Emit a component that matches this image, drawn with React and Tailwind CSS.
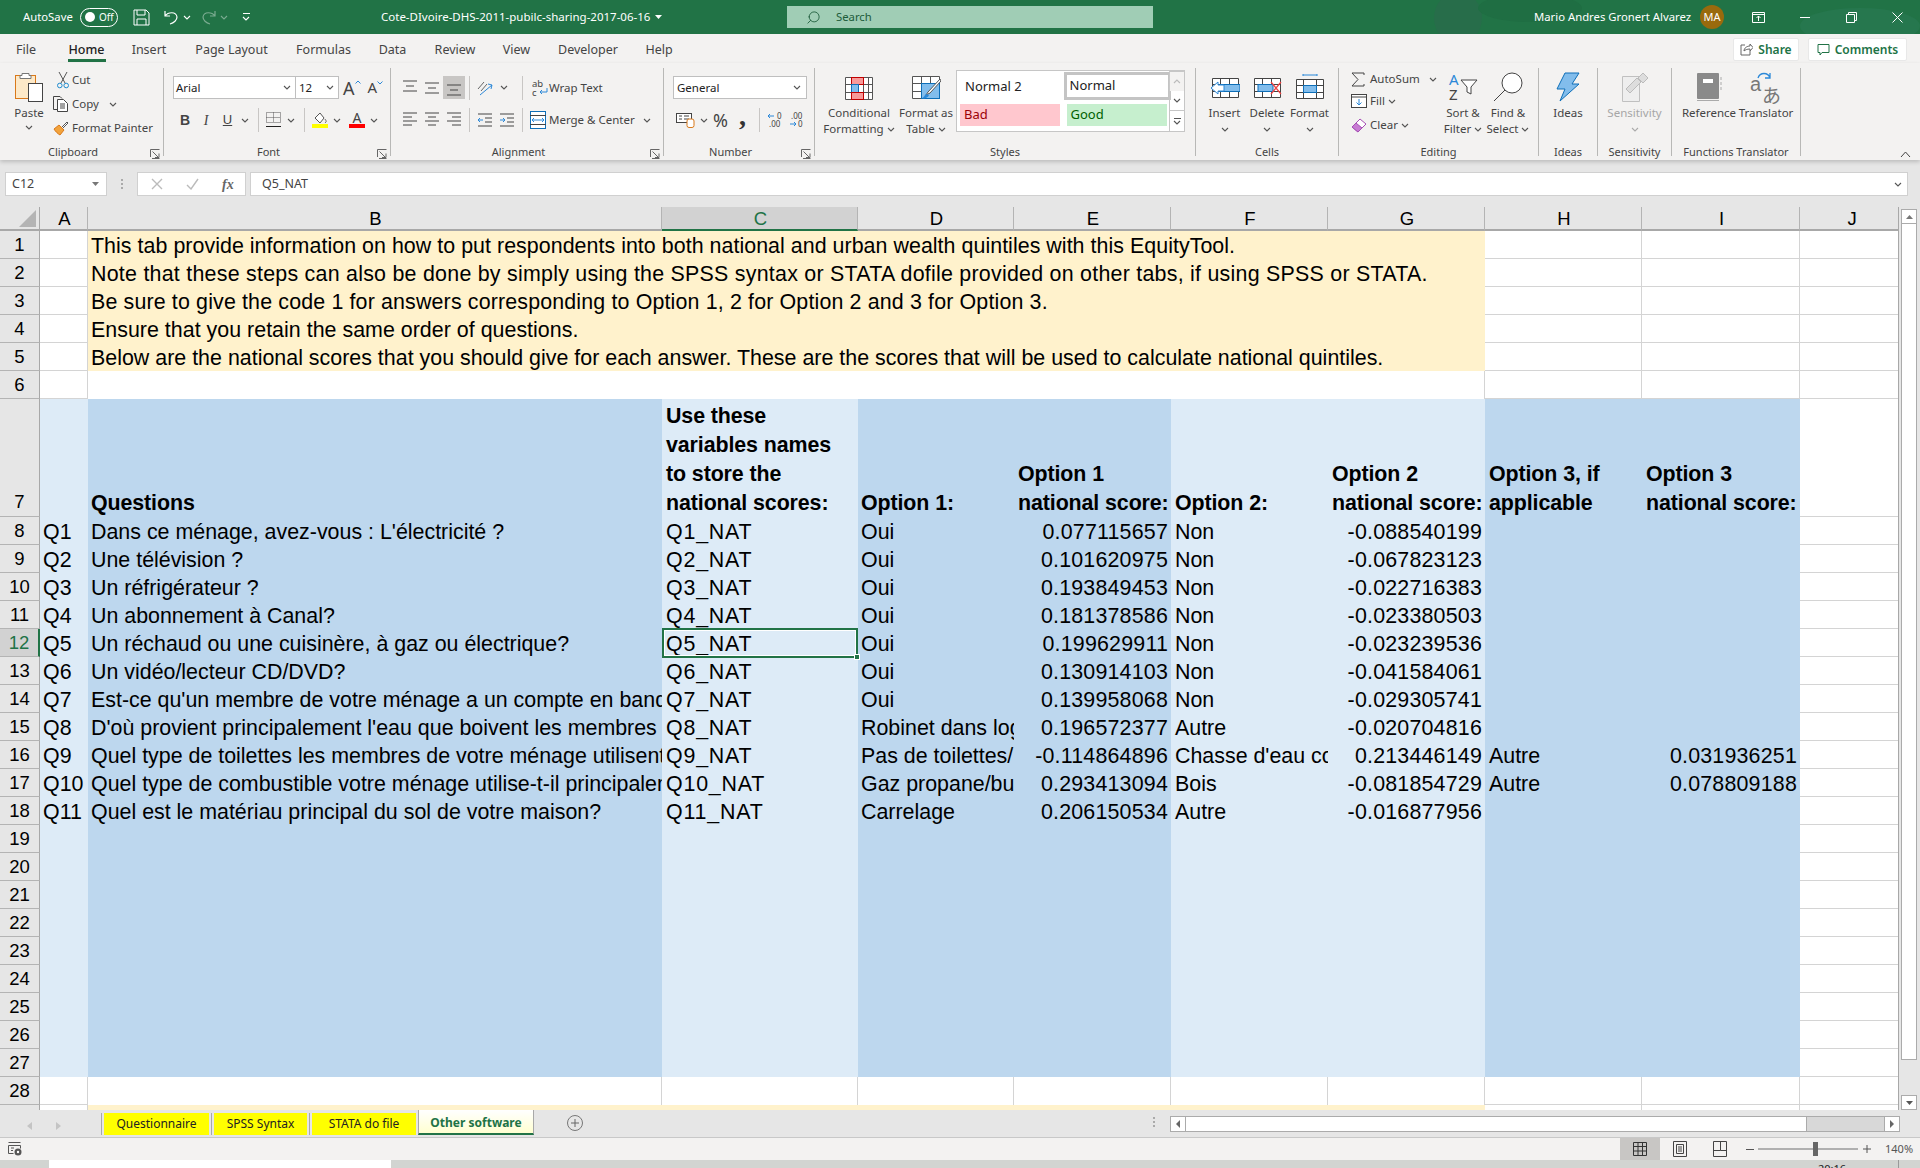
import React from "react";
import { Search } from "lucide-react";

const gridCols = "grid grid-rows-[minmax(0,1fr)] grid-cols-[40px_48px_574px_196px_156px_157px_157px_157px_157px_158px_99px]";
const dark = "bg-[#bdd7ee]";
const light = "bg-[#ddebf7]";
const cream = "bg-[#fff2cc]";
const plain = "bg-white border-r border-b border-[#d4d4d4]";
const bodyFills = [light, dark, light, dark, dark, light, light, dark, dark, plain];

// hinted Excel text runs wider on some lines, so each note keeps its own tracking
const notes = [
  ["This tab provide information on how to put respondents into both national and urban wealth quintiles with this EquityTool.", "tracking-[0.04px]"],
  ["Note that these steps can also be done by simply using the SPSS syntax or STATA dofile provided on other tabs, if using SPSS or STATA.", "tracking-[0.25px]"],
  ["Be sure to give the code 1 for answers corresponding to Option 1, 2 for Option 2 and 3 for Option 3.", "tracking-[0.15px]"],
  ["Ensure that you retain the same order of questions.", "tracking-[0.02px]"],
  ["Below are the national scores that you should give for each answer. These are the scores that will be used to calculate national quintiles.", "tracking-[0.01px]"],
];

const rows = [
  ["Q1", "Dans ce ménage, avez-vous : L'électricité ?", "Q1_NAT", "Oui", "0.077115657", "Non", "-0.088540199"],
  ["Q2", "Une télévision ?", "Q2_NAT", "Oui", "0.101620975", "Non", "-0.067823123"],
  ["Q3", "Un réfrigérateur ?", "Q3_NAT", "Oui", "0.193849453", "Non", "-0.022716383"],
  ["Q4", "Un abonnement à Canal?", "Q4_NAT", "Oui", "0.181378586", "Non", "-0.023380503"],
  ["Q5", "Un réchaud ou une cuisinère, à gaz ou électrique?", "Q5_NAT", "Oui", "0.199629911", "Non", "-0.023239536"],
  ["Q6", "Un vidéo/lecteur CD/DVD?", "Q6_NAT", "Oui", "0.130914103", "Non", "-0.041584061"],
  ["Q7", "Est-ce qu'un membre de votre ménage a un compte en banque ?", "Q7_NAT", "Oui", "0.139958068", "Non", "-0.029305741"],
  ["Q8", "D'où provient principalement l'eau que boivent les membres de votre ménage ?", "Q8_NAT", "Robinet dans logement", "0.196572377", "Autre", "-0.020704816"],
  ["Q9", "Quel type de toilettes les membres de votre ménage utilisent ?", "Q9_NAT", "Pas de toilettes/nature", "-0.114864896", "Chasse d'eau connectée", "0.213446149", "Autre", "0.031936251"],
  ["Q10", "Quel type de combustible votre ménage utilise-t-il principalement ?", "Q10_NAT", "Gaz propane/butane", "0.293413094", "Bois", "-0.081854729", "Autre", "0.078809188"],
  ["Q11", "Quel est le matériau principal du sol de votre maison?", "Q11_NAT", "Carrelage", "0.206150534", "Autre", "-0.016877956"],
];

const Chev = ({ color = "#555" }) => (
  <svg width="8" height="5" viewBox="0 0 8 5" className="shrink-0">
    <path d="M1 1l3 3 3-3" fill="none" stroke={color} strokeWidth="1.1" />
  </svg>
);

const Launcher = () => (
  <svg width="10" height="10" viewBox="0 0 10 10">
    <path d="M0.5 8V0.5H9.5M2.5 2.5l6 6M5 8.5h4v-4M9.500 9.500H2" fill="none" stroke="#666" strokeWidth="1" />
  </svg>
);

const Lines = ({ kind }) => {
  const sets = {
    top: ["M0 1h14", "M3 6h8", "M0 11h14"],
    mid: ["M0 3h14", "M3 8h8", "M0 13h14"],
    bot: ["M0 5h14", "M3 10h8", "M0 15h14"],
    left: ["M0 1h14", "M0 5h9", "M0 9h14", "M0 13h9"],
    center: ["M0 1h14", "M3 5h8", "M0 9h14", "M3 13h8"],
    right: ["M0 1h14", "M5 5h9", "M0 9h14", "M5 13h9"],
  };
  return (
    <svg width="14" height="16" viewBox="0 0 14 16">
      {sets[kind].map((d) => <path key={d} d={d} stroke="#444" strokeWidth="1" />)}
    </svg>
  );
};

const CellsIcon = ({ children, width = 30 }) => (
  <svg width={width} height="26" viewBox={`0 0 ${width} 26`}>
    {children}
  </svg>
);

const BigBtn = ({ width, icon, lines, chev, gray }) => (
  <div className={`${width} flex flex-col items-center shrink-0 ${gray ? "text-[#a6a6a6]" : ""}`}>
    <div className="h-[37px] flex items-center justify-center">{icon}</div>
    {lines.map((l, i) => (
      <div key={l} className="h-[16px] leading-[16px] whitespace-nowrap flex items-center gap-[3px]">
        {l}
        {chev && i === lines.length - 1 && lines.length > 1 && <Chev />}
      </div>
    ))}
    {chev && lines.length === 1 && <div className="h-[16px] flex items-center"><Chev color={gray ? "#aaa" : "#555"} /></div>}
  </div>
);

const Group = ({ width, label, launcher, children }) => (
  <div className={`${width} shrink-0 h-[88px] border-r border-[#b8b8b6] flex flex-col relative`}>
    <div className="h-[76px] flex">{children}</div>
    <div className={`h-[12px] leading-[16px] text-[11px] text-center text-[#444] whitespace-nowrap ${launcher ? "pr-[17px]" : ""}`}>{label}</div>
    {launcher && <div className="absolute right-[3px] bottom-[-3px]"><Launcher /></div>}
  </div>
);

const Sep = ({ className = "" }) => <div className={`w-px h-[24px] bg-[#c8c6c4] shrink-0 ${className}`} />;

const Ribbon = () => (
  <div className="h-[97px] bg-[#f3f2f1] flex items-start pt-[5px] text-[11.5px] text-[#444] shrink-0 relative z-10 shadow-[0_2px_4px_rgba(0,0,0,0.18)]">
    <Group width="w-[164px]" label="Clipboard" launcher>
      <div className="w-[58px] flex flex-col items-center pt-[4px] shrink-0">
        <svg width="28" height="30" viewBox="0 0 28 30">
          <rect x="0.5" y="3.5" width="20" height="23" fill="#fde9c8" stroke="#d9791a" />
          <path d="M7 3.500V1.500h7v2h2v3H5v-3z" fill="#fff" stroke="#777" />
          <rect x="13.5" y="11.5" width="14" height="18" fill="#fff" stroke="#444" />
        </svg>
        <div className="leading-[16px] mt-[3px]">Paste</div>
        <div className="mt-[4px]"><Chev /></div>
      </div>
      <div className="flex flex-col ml-[-5px]">
        <div className="h-[24px] flex items-center">
          <div className="w-[19px] flex justify-center">
            <svg width="12" height="18" viewBox="0 0 12 18">
              <path d="M2 1l6 11M10 1L4 12" stroke="#555" fill="none" />
              <circle cx="2.8" cy="14.5" r="2.3" fill="none" stroke="#1e8bcd" />
              <circle cx="9.2" cy="14.5" r="2.3" fill="none" stroke="#1e8bcd" />
            </svg>
          </div>
          <span>Cut</span>
        </div>
        <div className="h-[24px] flex items-center">
          <div className="w-[19px]">
            <svg width="15" height="16" viewBox="0 0 15 16">
              <path d="M4 13.500H0.500V0.500H7l2 2" fill="none" stroke="#444" />
              <path d="M4.500 3.500H10.500l4 4v8h-10zM7 8h5M7 10h5M7 12h5" fill="#fff" stroke="#444" />
            </svg>
          </div>
          <span>Copy</span>
          <span className="ml-[10px]"><Chev /></span>
        </div>
        <div className="h-[24px] flex items-center">
          <div className="w-[19px]">
            <svg width="16" height="16" viewBox="0 0 16 16">
              <path d="M1 9l5-4 5 5-4 5c-2-1-5-4-6-6z" fill="#f2a33c" stroke="#d9791a" />
              <path d="M9 7l5-5 1 1-5 5" fill="#fff" stroke="#555" />
            </svg>
          </div>
          <span className="whitespace-nowrap">Format Painter</span>
        </div>
      </div>
    </Group>

    <Group width="w-[227px]" label="Font" launcher>
      <div className="flex flex-col pl-[9px] pt-[8px]">
        <div className="flex items-center h-[23px]">
          <div className="w-[123px] h-[23px] bg-white border border-[#bfbfbf] flex items-center justify-between pl-[2px] pr-[4px] text-[#222]">Arial<Chev /></div>
          <div className="w-[43px] h-[23px] bg-white border border-[#bfbfbf] border-l-0 flex items-center justify-between pl-[3px] pr-[4px] text-[#222]">12<Chev /></div>
          <span className="ml-[4px] text-[18px] leading-none text-[#444] flex items-start">
            A
            <svg width="6" height="4" viewBox="0 0 6 4" className="mt-[1px]"><path d="M0.500 3.500L3 1l2.500 2.500" fill="none" stroke="#2b88d8" /></svg>
          </span>
          <span className="ml-[7px] text-[15px] leading-none text-[#444] flex items-start">
            A
            <svg width="6" height="4" viewBox="0 0 6 4" className="mt-[1px]"><path d="M0.500 0.500L3 3l2.500-2.500" fill="none" stroke="#2b88d8" /></svg>
          </span>
        </div>
        <div className="flex items-center h-[24px] mt-[9px] text-[#444]">
          <span className="w-[22px] pl-[7px] font-bold text-[14px] font-['Liberation_Sans',sans-serif]">B</span>
          <span className="w-[22px] text-center italic text-[14px] font-['Liberation_Serif',serif]">I</span>
          <span className="w-[21px] text-center underline text-[13px] font-['Liberation_Sans',sans-serif]">U</span>
          <span className="ml-[3px]"><Chev /></span>
          <Sep className="ml-[9px]" />
          <svg width="15" height="16" viewBox="0 0 15 16" className="ml-[7px]">
            <path d="M0.500 0.500h14v10h-14zM7.500 0.500v10M0.500 5.500h14" fill="none" stroke="#555" strokeDasharray="1 1" />
            <path d="M0 14.500h15" stroke="#222" />
          </svg>
          <span className="ml-[6px]"><Chev /></span>
          <Sep className="ml-[9px]" />
          <div className="ml-[7px] w-[16px] flex flex-col items-center">
            <svg width="15" height="12" viewBox="0 0 15 12"><path d="M2 6l5-5 4 5-4 5zM12 7c1 2 2 2 0 4" fill="#fff" stroke="#555" /></svg>
            <div className="w-[16px] h-[4px] bg-[#ffff00]" />
          </div>
          <span className="ml-[5px]"><Chev /></span>
          <div className="ml-[8px] w-[16px] flex flex-col items-center leading-none">
            <span className="text-[14px] leading-[12px]">A</span>
            <div className="w-[16px] h-[4px] bg-[#ff0000]" />
          </div>
          <span className="ml-[5px]"><Chev /></span>
        </div>
      </div>
    </Group>

    <Group width="w-[273px]" label="Alignment" launcher>
      <div className="flex flex-col pl-[12px] pt-[8px]">
        <div className="flex items-center h-[23px]">
          <Lines kind="top" />
          <span className="ml-[8px]"><Lines kind="mid" /></span>
          <div className="ml-[4px] w-[22px] h-[23px] bg-[#c8c6c4] flex items-center justify-center"><Lines kind="bot" /></div>
          <Sep className="ml-[4px]" />
          <svg width="17" height="16" viewBox="0 0 17 16" className="ml-[7px]">
            <path d="M1 9l6-7M4 11l6-7" stroke="#666" fill="none" />
            <path d="M3 15L15 5M11 4l4 1-1 4" stroke="#2b88d8" fill="none" />
          </svg>
          <span className="ml-[6px]"><Chev /></span>
          <Sep className="ml-[14px]" />
          <svg width="16" height="20" viewBox="0 0 16 20" className="ml-[9px]">
            <text x="0" y="9" fontSize="9.5" fill="#444" fontFamily="Noto Sans">ab</text>
            <text x="0" y="18" fontSize="9.5" fill="#444" fontFamily="Noto Sans">c</text>
            <path d="M15 10v4H8M10 12l-2 2 2 2" fill="none" stroke="#2b88d8" />
          </svg>
          <span className="ml-[1px] whitespace-nowrap">Wrap Text</span>
        </div>
        <div className="flex items-center h-[24px] mt-[9px]">
          <Lines kind="left" />
          <span className="ml-[8px]"><Lines kind="center" /></span>
          <span className="ml-[8px]"><Lines kind="right" /></span>
          <Sep className="ml-[8px]" />
          <svg width="14" height="14" viewBox="0 0 14 14" className="ml-[8px]">
            <path d="M0 1h14M7 5h7M7 9h7M0 13h14" stroke="#444" />
            <path d="M5 7H0M2 5L0 7l2 2" stroke="#2b88d8" fill="none" />
          </svg>
          <svg width="14" height="14" viewBox="0 0 14 14" className="ml-[8px]">
            <path d="M0 1h14M7 5h7M7 9h7M0 13h14" stroke="#444" />
            <path d="M0 7h5M3 5l2 2-2 2" stroke="#2b88d8" fill="none" />
          </svg>
          <Sep className="ml-[8px]" />
          <svg width="16" height="18" viewBox="0 0 16 18" className="ml-[7px]">
            <rect x="0.5" y="0.5" width="15" height="17" fill="#fff" stroke="#0e6fb8" />
            <path d="M0 4.500h16M0 13.500h16" stroke="#444" />
            <path d="M2 9h12M4 7L2 9l2 2M12 7l2 2-2 2" stroke="#2b88d8" fill="none" />
          </svg>
          <span className="ml-[3px] w-[85px] whitespace-nowrap">Merge &amp; Center</span>
          <span className="ml-[9px]"><Chev /></span>
        </div>
      </div>
    </Group>

    <Group width="w-[151px]" label="Number" launcher>
      <div className="flex flex-col pl-[9px] pt-[8px]">
        <div className="w-[134px] h-[23px] bg-white border border-[#bfbfbf] flex items-center justify-between pl-[3px] pr-[5px] text-[#222]">General<Chev /></div>
        <div className="flex items-center h-[24px] mt-[9px]">
          <svg width="19" height="16" viewBox="0 0 19 16" className="ml-[3px]">
            <rect x="0.5" y="1.5" width="15" height="9" fill="#fff" stroke="#444" />
            <path d="M3 4h3M3 7h3M8 4h5M8 7h5" stroke="#444" />
            <rect x="11" y="7" width="7" height="8.5" rx="2" fill="#fff" stroke="#d9791a" />
          </svg>
          <span className="ml-[5px]"><Chev /></span>
          <span className="ml-[5px] w-[18px] text-[18px] leading-none text-[#444]">%</span>
          <span className="ml-[8px] w-[10px] text-[28px] leading-none font-bold font-['Liberation_Serif',serif] text-[#333] mt-[-8px]">,</span>
          <Sep className="ml-[10px]" />
          <svg width="16" height="16" viewBox="0 0 16 16" className="ml-[7px]">
            <path d="M7 4H1M3 2L1 4l2 2" stroke="#2b88d8" fill="none" />
            <text x="10" y="7" fontSize="8" fill="#444">0</text>
            <text x="2" y="15" fontSize="8" fill="#444">.00</text>
          </svg>
          <svg width="16" height="16" viewBox="0 0 16 16" className="ml-[6px]">
            <text x="2" y="7" fontSize="8" fill="#444">.00</text>
            <path d="M1 12h6M5 10l2 2-2 2" stroke="#2b88d8" fill="none" />
            <text x="9" y="15" fontSize="8" fill="#444">0</text>
          </svg>
        </div>
      </div>
    </Group>

    <Group width="w-[381px]" label="Styles">
      <div className="w-[4px] shrink-0" />
      <BigBtn
        width="w-[80px]"
        chev
        lines={["Conditional", "Formatting"]}
        icon={
          <CellsIcon>
            <path d="M1.500 3.500h27v22h-27zM1.500 10.500h27M1.500 18.500h27M7.500 3.500v22M19.500 3.500v22M24.500 3.500v22" fill="#fff" stroke="#555" />
            <rect x="7.5" y="3.5" width="12" height="7" fill="#f79a9a" stroke="#c00000" />
            <rect x="7.5" y="10.5" width="7" height="8" fill="#82bdec" stroke="#0e6fb8" />
            <rect x="7.5" y="18.5" width="12" height="7" fill="#f79a9a" stroke="#c00000" />
          </CellsIcon>
        }
      />
      <BigBtn
        width="w-[54px]"
        chev
        lines={["Format as", "Table"]}
        icon={
          <CellsIcon>
            <path d="M1.500 2.500h27v22h-27zM1.500 9.500h27M1.500 17.500h27M10.500 2.500v22M19.500 2.500v22" fill="#fff" stroke="#555" />
            <rect x="10.5" y="9.5" width="18" height="15" fill="#82bdec" stroke="#0e6fb8" />
            <path d="M29 5L17 18l-2 3 4-2L30 7z" fill="#fff" stroke="#555" />
            <path d="M15 20c-2 2-2 4-5 4 3 1 7 0 8-3z" fill="#2b88d8" />
          </CellsIcon>
        }
      />
      <div className="ml-[3px] mt-[2px] w-[229px] h-[62px] bg-white border border-[#c6c6c6] flex">
        <div className="w-[213px] grid grid-cols-2 grid-rows-[30px_30px] text-[13px] text-[#222] pl-[3px]">
          <div className="h-[30px] pt-[1px] flex items-center pl-[5px]">Normal 2</div>
          <div className="h-[28px] mt-[1px] ml-[-1px] border-[3px] border-[#c4c4c4] flex items-center pl-[3px] w-[107px]">Normal</div>
          <div className="h-[22px] mt-[3px] w-[100px] bg-[#ffc7ce] text-[#9c0006] flex items-center pl-[4px]">Bad</div>
          <div className="h-[22px] mt-[3px] ml-[2px] w-[100px] bg-[#c6efce] text-[#006100] flex items-center pl-[4px]">Good</div>
        </div>
        <div className="w-[15px] flex flex-col border-l border-[#c6c6c6]">
          <div className="h-[20px] bg-[#f3f2f1] border-b border-[#c6c6c6] flex items-center justify-center rotate-180"><Chev color="#bbb" /></div>
          <div className="h-[20px] border-b border-[#c6c6c6] flex items-center justify-center"><Chev /></div>
          <div className="flex-1 flex flex-col items-center justify-center gap-[1px]"><div className="w-[7px] h-px bg-[#555]" /><Chev /></div>
        </div>
      </div>
    </Group>

    <Group width="w-[143px]" label="Cells">
      <div className="w-[7px] shrink-0" />
      <BigBtn
        width="w-[43px]"
        chev
        lines={["Insert"]}
        icon={
          <CellsIcon>
            <path d="M2.500 4.500h26v19h-26zM2.500 10.500h26M2.500 17.500h26M10.500 4.500v19M19.500 4.500v19" fill="#fff" stroke="#444" />
            <rect x="10" y="10.5" width="20" height="7" fill="#82bdec" stroke="#0e6fb8" />
            <path d="M1 14l7-6v3h6v6H8v3z" fill="#fff" stroke="#2b88d8" />
          </CellsIcon>
        }
      />
      <BigBtn
        width="w-[42px]"
        chev
        lines={["Delete"]}
        icon={
          <CellsIcon>
            <path d="M2.500 4.500h26v19h-26zM2.500 10.500h26M2.500 17.500h26M10.500 4.500v19M19.500 4.500v19" fill="#fff" stroke="#444" />
            <rect x="6" y="10.5" width="15" height="7" fill="#82bdec" stroke="#0e6fb8" />
            <path d="M19 8l10 12M29 8L19 20" stroke="#ee4444" strokeWidth="1.2" />
          </CellsIcon>
        }
      />
      <BigBtn
        width="w-[43px]"
        chev
        lines={["Format"]}
        icon={
          <CellsIcon>
            <path d="M8 1h14M8 0v2M22 0v2" stroke="#2b88d8" />
            <path d="M1.500 5.500h27v19h-27zM1.500 11.500h27M1.500 18.500h27M8.500 5.500v19M21.500 5.500v19" fill="#fff" stroke="#444" />
            <rect x="8.5" y="11.5" width="13" height="7" fill="#82bdec" stroke="#0e6fb8" />
          </CellsIcon>
        }
      />
    </Group>

    <Group width="w-[200px]" label="Editing">
      <div className="w-[98px] shrink-0 flex flex-col pl-[12px]">
        <div className="h-[22px] flex items-center">
          <div className="w-[19px]">
            <svg width="14" height="15" viewBox="0 0 14 15"><path d="M13 3V1H1l6 6.500L1 14h12v-2" fill="none" stroke="#444" /></svg>
          </div>
          <span className="w-[50px]">AutoSum</span>
          <span className="ml-[9px]"><Chev /></span>
        </div>
        <div className="h-[22px] flex items-center">
          <div className="w-[19px]">
            <svg width="16" height="14" viewBox="0 0 16 14"><rect x="0.5" y="0.5" width="15" height="13" fill="#fff" stroke="#444" /><path d="M0 3h16" stroke="#444" /><path d="M8 5v6M5.500 8.500L8 11l2.500-2.500" fill="none" stroke="#2b88d8" /></svg>
          </div>
          <span>Fill</span>
          <span className="ml-[3px]"><Chev /></span>
        </div>
        <div className="h-[24px] mt-[1px] flex items-center">
          <div className="w-[19px]">
            <svg width="16" height="16" viewBox="0 0 16 16"><path d="M1 10l8-8 6 5-8 8z" fill="#fff" stroke="#a64fb5" /><path d="M1 10l4-4 6 5-4 4z" fill="#c77bd3" stroke="#a64fb5" /></svg>
          </div>
          <span>Clear</span>
          <span className="ml-[3px]"><Chev /></span>
        </div>
      </div>
      <BigBtn
        width="w-[52px]"
        chev
        lines={["Sort &", "Filter"]}
        icon={
          <svg width="30" height="30" viewBox="0 0 30 30">
            <text x="1" y="13" fontSize="15" fill="#2b88d8">A</text>
            <text x="1" y="28" fontSize="15" fill="#444">Z</text>
            <path d="M13 8h16l-6 7v7l-4-2v-5z" fill="#fff" stroke="#444" />
          </svg>
        }
      />
      <BigBtn
        width="w-[38px]"
        chev
        lines={["Find &", "Select"]}
        icon={
          <svg width="30" height="30" viewBox="0 0 30 30">
            <circle cx="19" cy="11" r="10" fill="#fff" stroke="#444" />
            <path d="M12 18L1 29" stroke="#444" />
          </svg>
        }
      />
    </Group>

    <Group width="w-[59px]" label="Ideas">
      <BigBtn
        width="w-full"
        lines={["Ideas"]}
        icon={
          <svg width="24" height="30" viewBox="0 0 24 30">
            <path d="M9 1h14l-7 11h7L4 29l5-12H1z" fill="#82bdec" stroke="#0e6fb8" />
          </svg>
        }
      />
    </Group>

    <Group width="w-[74px]" label="Sensitivity">
      <BigBtn
        width="w-full"
        gray
        chev
        lines={["Sensitivity"]}
        icon={
          <svg width="28" height="30" viewBox="0 0 28 30">
            <path d="M1.500 4.500h17v25h-17z" fill="#eee" stroke="#c0c0c0" />
            <path d="M5 17l11-11 4 4L9 21z" fill="#ddd" stroke="#bbb" />
            <path d="M17 6l5-5 5 5-5 5z" fill="#ddd" stroke="#bbb" />
          </svg>
        }
      />
    </Group>

    <Group width="w-[129px]" label="Functions Translator">
      <BigBtn
        width="w-[74px]"
        lines={["Reference"]}
        icon={
          <svg width="26" height="32" viewBox="0 0 26 32">
            <rect x="1" y="2" width="22" height="26" rx="1" fill="#8a8a8a" />
            <rect x="7" y="8" width="10" height="4" fill="#fff" />
            <path d="M1 29.500h22M25 6v3M25 11v3M25 16v3" stroke="#aaa" />
          </svg>
        }
      />
      <BigBtn
        width="w-[40px]"
        lines={["Translator"]}
        icon={
          <svg width="32" height="34" viewBox="0 0 32 34">
            <path d="M8 8c2-6 10-6 12 0M20 3v5h-5" fill="none" stroke="#2b88d8" strokeWidth="1.3" />
            <text x="0" y="21" fontSize="20" fill="#777" fontFamily="Liberation Sans">a</text>
            <text x="12" y="33" fontSize="19" fill="#777" fontFamily="Noto Sans CJK JP">あ</text>
          </svg>
        }
      />
    </Group>

    <div className="ml-auto mr-[9px] mt-[83px]">
      <svg width="11" height="7" viewBox="0 0 11 7"><path d="M1 6l4.500-5L10 6" fill="none" stroke="#444" /></svg>
    </div>
  </div>
);

const tabs = [
  ["File", "ml-[17px] w-[18px]"],
  ["Home", "ml-[33px] w-[37px]"],
  ["Insert", "ml-[28px] w-[32px]"],
  ["Page Layout", "ml-[31px] w-[71px]"],
  ["Formulas", "ml-[30px] w-[53px]"],
  ["Data", "ml-[29px] w-[27px]"],
  ["Review", "ml-[29px] w-[40px]"],
  ["View", "ml-[28px] w-[27px]"],
  ["Developer", "ml-[28px] w-[60px]"],
  ["Help", "ml-[28px] w-[26px]"],
];

const TabRow = () => (
  <div className="h-[29px] bg-[#f3f2f1] flex text-[12.5px] text-[#444] shrink-0">
    {tabs.map(([t, cls]) => (
      <div key={t} className={`${cls} h-[29px] flex flex-col items-center shrink-0`}>
        <div className={`h-[25px] leading-[32px] whitespace-nowrap ${t === "Home" ? "text-[#222] font-medium" : ""}`}>{t}</div>
        {t === "Home" && <div className="w-[38px] h-[3px] bg-[#217346]" />}
      </div>
    ))}
    <div className="ml-auto flex items-start pt-[4px] pr-[13px] gap-[9px] text-[#217346] font-semibold text-[12px]">
      <div className="w-[66px] h-[23px] bg-white rounded-[2px] border border-[#e8e8e8] flex items-center justify-center gap-[5px]">
        <svg width="13" height="13" viewBox="0 0 13 13"><path d="M5 2H1v10h9V8M4 8c0-3 3-5 6-5V1l3 3.500L10 8V6c-3 0-5 1-6 2z" fill="none" stroke="#666" /></svg>
        Share
      </div>
      <div className="w-[99px] h-[23px] bg-white rounded-[2px] border border-[#e8e8e8] flex items-center justify-center gap-[5px]">
        <svg width="13" height="13" viewBox="0 0 13 13"><path d="M1 1.500h11v8H5l-2 2.500V9.500H1z" fill="none" stroke="#217346" /></svg>
        Comments
      </div>
    </div>
  </div>
);

const TitleBar = () => (
  <div className="h-[34px] bg-[#217346] flex items-center text-white text-[11.3px] shrink-0 relative overflow-hidden">
    <svg width="560" height="34" viewBox="0 0 560 34" className="absolute right-0 top-0">
      <ellipse cx="98" cy="18" rx="24" ry="26" fill="#276d4a" />
      <ellipse cx="170" cy="8" rx="52" ry="14" fill="#1f6e43" />
      <ellipse cx="500" cy="26" rx="60" ry="18" fill="#26774e" />
    </svg>
    <span className="ml-[23px] w-[50px] whitespace-nowrap relative">AutoSave</span>
    <div className="ml-[7px] w-[38px] h-[19px] rounded-full border border-white flex items-center pl-[4px] text-[10px] relative">
      <div className="w-[10px] h-[10px] rounded-full bg-white" />
      <span className="ml-[4px]">Off</span>
    </div>
    <svg width="17" height="17" viewBox="0 0 17 17" className="ml-[15px] relative">
      <path d="M1 1h12l3 3v12H1zM4 1v5h8V1M4 16v-6h9v6" fill="none" stroke="#fff" />
    </svg>
    <svg width="16" height="16" viewBox="0 0 16 16" className="ml-[13px] relative">
      <path d="M2 2v5h5M2 7c3-4 11-5 12 1 0 3-3 6-7 7" fill="none" stroke="#fff" strokeWidth="1.2" />
    </svg>
    <span className="ml-[4px] relative"><Chev color="#fff" /></span>
    <svg width="16" height="16" viewBox="0 0 16 16" className="ml-[10px] relative opacity-40">
      <path d="M14 2v5H9M14 7C11 3 3 2 2 8c0 3 3 6 7 7" fill="none" stroke="#fff" strokeWidth="1.2" />
    </svg>
    <span className="ml-[3px] relative opacity-40"><Chev color="#fff" /></span>
    <div className="ml-[14px] w-[8px] flex flex-col items-center gap-[2px] relative">
      <div className="w-[7px] h-px bg-white" />
      <Chev color="#fff" />
    </div>
    <span className="ml-[131px] w-[270px] text-[11.5px] whitespace-nowrap relative">Cote-DIvoire-DHS-2011-pubilc-sharing-2017-06-16</span>
    <svg width="7" height="4" viewBox="0 0 7 4" className="ml-[4px] relative"><path d="M0 0h7L3.500 4z" fill="#fff" /></svg>
    <div className="ml-[125px] w-[366px] h-[22px] bg-[#a0cdb5] flex items-center text-[#1d5c3a] relative">
      <Search size={15} strokeWidth={1.4} className="ml-[19px] -scale-x-100" />
      <span className="ml-[15px]">Search</span>
    </div>
    <span className="ml-[381px] w-[155px] whitespace-nowrap relative">Mario Andres Gronert Alvarez</span>
    <div className="ml-[11px] w-[24px] h-[24px] rounded-full bg-[#996a0d] flex items-center justify-center text-[11px] relative">MA</div>
    <svg width="13" height="11" viewBox="0 0 13 11" className="ml-[28px] relative"><path d="M0.500 0.500h12v10h-12zM0.500 2.500h12M6.500 9V4M4.500 6l2-2 2 2" fill="none" stroke="#fff" /></svg>
    <div className="ml-[35px] w-[10px] h-px bg-white relative" />
    <svg width="11" height="11" viewBox="0 0 11 11" className="ml-[36px] relative"><path d="M0.500 2.500h8v8h-8zM2.500 2.500v-2h8v8h-2" fill="none" stroke="#fff" /></svg>
    <svg width="11" height="11" viewBox="0 0 11 11" className="ml-[35px] relative"><path d="M0.500 0.500l10 10M10.500 0.500l-10 10" stroke="#fff" /></svg>
  </div>
);

const FormulaBar = () => (
  <div className="h-[47px] bg-[#e6e6e6] flex items-start pt-[12px] pl-[5px] text-[12.5px] text-[#444] shrink-0">
    <div className="w-[102px] h-[24px] bg-white border border-[#d0d0d0] flex items-center justify-between pl-[6px] pr-[7px]">
      C12
      <svg width="7" height="4" viewBox="0 0 7 4"><path d="M0 0h7L3.500 4z" fill="#777" /></svg>
    </div>
    <div className="w-[30px] h-[24px] flex flex-col items-center justify-center gap-[2px]">
      <div className="w-[2px] h-[2px] bg-[#aaa]" />
      <div className="w-[2px] h-[2px] bg-[#aaa]" />
      <div className="w-[2px] h-[2px] bg-[#aaa]" />
    </div>
    <div className="w-[109px] h-[24px] bg-white border border-[#d0d0d0] flex items-center pl-[13px] gap-[23px]">
      <svg width="12" height="12" viewBox="0 0 12 12"><path d="M1 1l10 10M11 1L1 11" stroke="#bbb" strokeWidth="1.4" /></svg>
      <svg width="13" height="12" viewBox="0 0 13 12"><path d="M1 7l4 4 7-10" fill="none" stroke="#bbb" strokeWidth="1.4" /></svg>
      <span className="italic font-['Liberation_Serif',serif] text-[14px] text-[#666] font-bold">fx</span>
    </div>
    <div className="ml-[4px] w-[1658px] h-[24px] bg-white border border-[#d0d0d0] flex items-center justify-between pl-[11px] pr-[5px]">
      Q5_NAT
      <Chev />
    </div>
  </div>
);

const RowHead = ({ n, selected, tall }) => (
  <div
    className={`${tall ? "items-end" : "items-center"} flex justify-center pt-[1px] border-b border-[#b4b4b4] text-[18.5px] leading-[28px] ${
      selected
        ? "bg-[#d2d2d2] text-[#217346] border-r-2 border-r-[#217346]"
        : "bg-[#e6e6e6] text-black border-r border-r-[#a8a8a8]"
    }`}
  >
    {n}
  </div>
);

const NoteRow = ({ n, text, height, fill = cream, track = "" }) => (
  <div className={`${gridCols} ${height}`}>
    <RowHead n={n} />
    <div className={plain} />
    <div className={`col-span-6 ${fill} pl-[3px] pt-[1px] whitespace-nowrap leading-[28px] ${track}`}>{text}</div>
    <div className={plain} />
    <div className={plain} />
    <div className={plain} />
  </div>
);

const Cell = ({ fill, right, children, selected, pad = "pl-[3px]", track = "" }) => (
  <div className={`${fill} relative whitespace-nowrap pt-[1px] leading-[28px] ${track} ${right ? "text-right pr-[3px] tracking-[0.2px]" : pad} ${selected ? "overflow-visible z-10" : "overflow-hidden"}`}>
    {children}
    {selected && (
      <div className="absolute inset-x-0 top-[-1px] bottom-[-1px] border-2 border-[#217346] outline outline-1 -outline-offset-3 outline-white">
        <div className="absolute right-[-4px] bottom-[-4px] w-[6px] h-[6px] bg-[#217346] border border-white" />
      </div>
    )}
  </div>
);

const HeadCell = ({ fill, children, pad = "pl-[4px]" }) => (
  <div className={`${fill} h-[118px] flex items-end font-bold leading-[29px] tracking-[-0.1px] ${pad}`}>
    <div className="whitespace-pre mb-[-1px]">{children}</div>
  </div>
);

const Sheet = () => (
  <div className="h-[903px] flex bg-[#e6e6e6] shrink-0 overflow-hidden">
    <div className="w-[1899px] bg-white border-r border-[#a8a8a8] font-['Liberation_Sans',sans-serif] text-[21.4px] text-black overflow-hidden">
      <div className={`${gridCols} h-[24px] bg-[#e6e6e6] text-[18.5px] leading-[23px] text-center`}>
        <div className="border-b-2 border-r border-[#a8a8a8] flex items-center justify-end pr-[3px]">
          <svg width="17" height="17" viewBox="0 0 17 17"><path d="M17 0v17H0z" fill="#b4b4b4" /></svg>
        </div>
        {["A", "B", "C", "D", "E", "F", "G", "H", "I", "J"].map((c) => (
          <div
            key={c}
            className={`border-r border-[#b4b4b4] ${c === "J" ? "pl-[6px]" : "pl-[2px]"} ${c === "C" ? "bg-[#d2d2d2] text-[#217346] border-b-2 border-b-[#217346]" : "border-b-2 border-b-[#a8a8a8]"}`}
          >
            {c}
          </div>
        ))}
      </div>

      {notes.map(([t, track], i) => <NoteRow key={i} n={i + 1} text={t} track={track} height="h-[28px]" />)}
      <NoteRow n={6} text="" height="h-[28px]" fill="bg-white border-r border-[#d4d4d4]" />

      <div className={`${gridCols} h-[118px]`}>
        <RowHead n={7} tall />
        <HeadCell fill={light} />
        <HeadCell fill={dark} pad="pl-[3px]">Questions</HeadCell>
        <HeadCell fill={light}>{"Use these\nvariables names\nto store the\nnational scores:"}</HeadCell>
        <HeadCell fill={dark} pad="pl-[3px]">Option 1:</HeadCell>
        <HeadCell fill={dark}>{"Option 1\nnational score:"}</HeadCell>
        <HeadCell fill={light}>Option 2:</HeadCell>
        <HeadCell fill={light}>{"Option 2\nnational score:"}</HeadCell>
        <HeadCell fill={dark}>{"Option 3, if\napplicable"}</HeadCell>
        <HeadCell fill={dark}>{"Option 3\nnational score:"}</HeadCell>
        <div className={plain} />
      </div>

      {rows.map((r, i) => (
        <div key={r[0]} className={`${gridCols} h-[28px]`}>
          <RowHead n={i + 8} selected={i === 4} />
          <Cell fill={light}>{r[0]}</Cell>
          <Cell fill={dark}>{r[1]}</Cell>
          <Cell fill={light} selected={i === 4} pad="pl-[4px]" track="tracking-[0.8px]">{r[2]}</Cell>
          <Cell fill={dark}>{r[3]}</Cell>
          <Cell fill={dark} right>{r[4]}</Cell>
          <Cell fill={light} pad="pl-[4px]">{r[5]}</Cell>
          <Cell fill={light} right>{r[6]}</Cell>
          <Cell fill={dark} pad="pl-[4px]">{r[7]}</Cell>
          <Cell fill={dark} right>{r[8]}</Cell>
          <div className={plain} />
        </div>
      ))}

      {[19, 20, 21, 22, 23, 24, 25, 26, 27].map((n) => (
        <div key={n} className={`${gridCols} h-[28px]`}>
          <RowHead n={n} />
          {bodyFills.map((f, i) => <div key={i} className={f} />)}
        </div>
      ))}

      <div className={`${gridCols} h-[28px]`}>
        <RowHead n={28} />
        {bodyFills.map((_, i) => (
          <div key={i} className={`bg-white border-r border-[#d4d4d4] ${i === 0 || i > 6 ? "border-b" : ""}`} />
        ))}
      </div>
      <NoteRow n="" text="" height="h-[6px]" />
    </div>

    <div className="w-[20px] pl-[2px] pt-[2px] flex flex-col">
      <div className="w-[16px] h-[15px] bg-white border border-[#ababab] flex items-center justify-center">
        <svg width="7" height="4" viewBox="0 0 7 4"><path d="M3.500 0L7 4H0z" fill="#777" /></svg>
      </div>
      <div className="w-[16px] h-[836px] bg-white border border-[#ababab] border-t-0" />
      <div className="flex-1" />
      <div className="w-[16px] h-[15px] bg-white border border-[#ababab] flex items-center justify-center">
        <svg width="7" height="4" viewBox="0 0 7 4"><path d="M0 0h7L3.500 4z" fill="#555" /></svg>
      </div>
    </div>
  </div>
);

const SheetTab = ({ label, width }) => (
  <>
    <div className="w-px h-[22px] bg-[#a8a8a8] mx-[2px]" />
    <div className={`${width} h-[22px] bg-[#ffff00] flex items-center justify-center text-[#222]`}>{label}</div>
  </>
);

const SheetTabs = () => (
  <div className="h-[28px] bg-[#e6e6e6] border-b border-[#c8c8c8] flex items-start text-[12px] shrink-0">
    <div className="w-[99px] h-[25px] flex items-center pl-[27px] gap-[24px] mt-[3px]">
      <svg width="5" height="8" viewBox="0 0 5 8"><path d="M5 0v8L0 4z" fill="#c4c4c4" /></svg>
      <svg width="5" height="8" viewBox="0 0 5 8"><path d="M0 0v8l5-4z" fill="#c4c4c4" /></svg>
    </div>
    <div className="flex items-center mt-[3px]">
      <SheetTab label="Questionnaire" width="w-[105px]" />
      <SheetTab label="SPSS Syntax" width="w-[93px]" />
      <SheetTab label="STATA do file" width="w-[104px]" />
    </div>
    <div className="ml-[2px] w-[116px] h-[25px] pt-[2px] bg-gradient-to-b from-white to-[#ffffd0] border-x border-[#a8a8a8] border-b-2 border-b-[#217346] flex items-center justify-center font-bold text-[#217346]">
      Other software
    </div>
    <div className="ml-[33px] mt-[5px] w-[16px] h-[16px] rounded-full border border-[#777] flex items-center justify-center text-[#666]">
      <svg width="8" height="8" viewBox="0 0 8 8"><path d="M4 0v8M0 4h8" stroke="#666" /></svg>
    </div>
    <div className="ml-[570px] mt-[7px] flex flex-col gap-[2px]">
      <div className="w-[2px] h-[2px] bg-[#aaa]" />
      <div className="w-[2px] h-[2px] bg-[#aaa]" />
      <div className="w-[2px] h-[2px] bg-[#aaa]" />
    </div>
    <div className="ml-[15px] mt-[6px] w-[730px] h-[16px] flex border border-[#ababab] bg-[#d8d8d8]">
      <div className="w-[15px] bg-white border-r border-[#ababab] flex items-center justify-center">
        <svg width="4" height="8" viewBox="0 0 4 8"><path d="M4 0v8L0 4z" fill="#666" /></svg>
      </div>
      <div className="w-[621px] bg-white border-r border-[#ababab]" />
      <div className="flex-1" />
      <div className="w-[15px] bg-white border-l border-[#ababab] flex items-center justify-center">
        <svg width="4" height="8" viewBox="0 0 4 8"><path d="M0 0v8l4-4z" fill="#666" /></svg>
      </div>
    </div>
  </div>
);

const StatusBar = () => (
  <div className="h-[22px] bg-[#f3f2f1] flex items-center text-[11px] text-[#555] shrink-0">
    <svg width="14" height="14" viewBox="0 0 14 14" className="ml-[8px]">
      <path d="M0.500 0.500h12M0.500 3.500h12v3M0.500 3.500v8h5M3 6h3M3 8.500h2" fill="none" stroke="#555" />
      <circle cx="10" cy="10" r="3.5" fill="#555" />
      <circle cx="10" cy="10" r="1.2" fill="#fff" />
    </svg>
    <div className="ml-[1598px] w-[40px] h-[22px] bg-[#c8c6c4] flex items-center justify-center">
      <svg width="14" height="14" viewBox="0 0 14 14"><path d="M0.500 0.500h13v13h-13zM0.500 4.500h13M0.500 9h13M5 0.500v13M9.500 0.500v13" fill="none" stroke="#333" /></svg>
    </div>
    <svg width="14" height="16" viewBox="0 0 14 16" className="ml-[13px]"><path d="M0.500 0.500h13v15h-13zM3.500 3.500h7v9h-7zM5 6h4M5 8h4M5 10h4" fill="none" stroke="#444" /></svg>
    <svg width="14" height="16" viewBox="0 0 14 16" className="ml-[26px]"><path d="M0.500 0.500h13v15h-13zM0.500 9.500h7v-9M7.500 9.500h6" fill="none" stroke="#444" /></svg>
    <div className="ml-[19px] w-[8px] h-px bg-[#555]" />
    <div className="ml-[4px] w-[100px] h-[2px] bg-[#b0b0b0] flex items-center relative">
      <div className="absolute left-[55px] w-[5px] h-[14px] bg-[#666]" />
    </div>
    <svg width="8" height="8" viewBox="0 0 8 8" className="ml-[5px]"><path d="M4 0v8M0 4h8" stroke="#555" /></svg>
    <span className="ml-[14px]">140%</span>
  </div>
);

const App = () => (
  <div className="w-[1920px] h-[1168px] overflow-hidden flex flex-col font-['Noto_Sans',sans-serif] bg-[#d2d4d1]">
    <TitleBar />
    <TabRow />
    <Ribbon />
    <FormulaBar />
    <Sheet />
    <SheetTabs />
    <StatusBar />
    <div className="h-[8px] flex relative overflow-hidden">
      <div className="ml-[49px] w-[342px] h-[8px] bg-white" />
      <span className="ml-[1427px] text-[11px] leading-[18px] text-[#222] whitespace-nowrap">20:16</span>
      <div className="ml-[52px] w-px h-[8px] bg-[#999]" />
    </div>
  </div>
);

export default App;
